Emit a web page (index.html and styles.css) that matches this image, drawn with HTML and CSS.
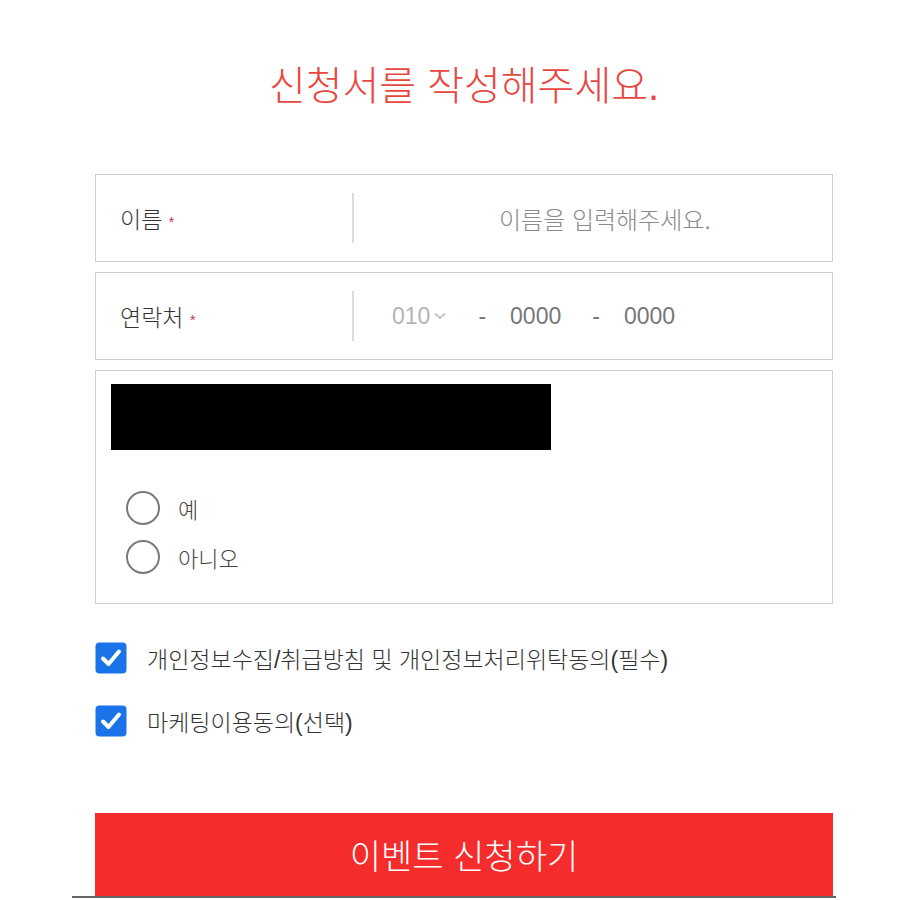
FILE: index.html
```html
<!DOCTYPE html>
<html lang="ko">
<head>
    <meta charset="UTF-8">
    <meta name="viewport" content="width=device-width, initial-scale=1.0">
    <title>이벤트 신청</title>
    <link rel="stylesheet" href="styles.css">
</head>
<body>
    <div class="container">
        <h1>신청서를 작성해주세요.</h1>
        <form class="apply-form">
            <div class="field-row">
                <div class="field-label">이름 <span class="req">*</span></div>
                <div class="field-input">
                    <span class="placeholder">이름을 입력해주세요.</span>
                </div>
            </div>
            <div class="field-row">
                <div class="field-label">연락처 <span class="req">*</span></div>
                <div class="field-input phone">
                    <span class="phone-prefix">010
                        <svg class="chevron" width="14" height="10" viewBox="0 0 14 10"><path d="M2 2.5 L7 7 L12 2.5" fill="none" stroke="#c8c8c8" stroke-width="2.2"/></svg>
                    </span>
                    <span class="dash">-</span>
                    <span class="phone-num">0000</span>
                    <span class="dash">-</span>
                    <span class="phone-num">0000</span>
                </div>
            </div>
            <div class="question-box">
                <div class="question-title"></div>
                <div class="radio-list">
                    <label class="radio-item"><span class="radio"></span>예</label>
                    <label class="radio-item"><span class="radio"></span>아니오</label>
                </div>
            </div>
            <div class="agree-list">
                <label class="agree-item">
                    <svg class="check" width="32" height="32" viewBox="0 0 32 32"><rect x="0.5" y="0.5" width="31" height="31" rx="4" fill="#1a73e8"/><path d="M8 16.5 L13.5 22 L24 9.5" fill="none" stroke="#fff" stroke-width="4" stroke-linecap="round" stroke-linejoin="round"/></svg>
                    개인정보수집/취급방침 및 개인정보처리위탁동의(필수)
                </label>
                <label class="agree-item">
                    <svg class="check" width="32" height="32" viewBox="0 0 32 32"><rect x="0.5" y="0.5" width="31" height="31" rx="4" fill="#1a73e8"/><path d="M8 16.5 L13.5 22 L24 9.5" fill="none" stroke="#fff" stroke-width="4" stroke-linecap="round" stroke-linejoin="round"/></svg>
                    마케팅이용동의(선택)
                </label>
            </div>
            <button type="button" class="submit-btn">이벤트 신청하기</button>
        </form>
    </div>
    <div class="bottom-line"></div>
</body>
</html>
```

FILE: styles.css
```css
body {
    margin: 0;
    background: #fff;
    font-family: "Liberation Sans", "Noto Sans CJK KR", sans-serif;
    color: #333;
}
.container {
    width: 738px;
    margin-left: 95px;
    padding-top: 58px;
}
h1 {
    margin: 0 0 59px;
    text-align: center;
    font-size: 40px;
    line-height: 57px;
    font-weight: 300;
    color: #e8473f;
}
.apply-form {
    display: flex;
    flex-direction: column;
}
.field-row {
    display: flex;
    align-items: center;
    height: 88px;
    box-sizing: border-box;
    border: 1px solid #cfcfcf;
    margin-bottom: 10px;
}
.field-label {
    width: 232px;
    padding-left: 24px;
    font-size: 23px;
    font-weight: 300;
    color: #333;
}
.req {
    color: #c4314b;
    font-size: 14px;
    vertical-align: middle;
}
.field-input {
    flex: 1;
    height: 50px;
    border-left: 2px solid #dcdcdc;
    display: flex;
    align-items: center;
    justify-content: center;
    padding-left: 24px;
    font-size: 23px;
}
.placeholder {
    color: #8a8a8a;
    font-size: 24px;
    font-weight: 300;
}
.field-input.phone {
    justify-content: flex-start;
    padding-left: 38px;
    color: #777;
}
.phone-prefix {
    color: #b4b4b4;
    display: flex;
    align-items: center;
    gap: 3px;
}
.dash {
    margin: 0 24px 0 31px;
}
.question-box {
    height: 234px;
    box-sizing: border-box;
    border: 1px solid #cfcfcf;
    padding: 13px 15px;
}
.question-title {
    width: 440px;
    height: 66px;
    background: #000;
}
.radio-list {
    display: flex;
    flex-direction: column;
    gap: 15px;
    margin-top: 41px;
    padding-left: 15px;
}
.radio-item {
    display: flex;
    align-items: center;
    gap: 18px;
    font-size: 22px;
    font-weight: 300;
    color: #444;
    height: 34px;
}
.radio {
    width: 30px;
    height: 30px;
    border: 2px solid #7a7a7a;
    border-radius: 50%;
}
.agree-list {
    display: flex;
    flex-direction: column;
    gap: 31px;
    margin-top: 38px;
}
.agree-item {
    display: flex;
    align-items: center;
    gap: 20px;
    font-size: 23px;
    font-weight: 300;
    color: #333;
    height: 32px;
}
.check {
    flex-shrink: 0;
}
.submit-btn {
    margin-top: 76px;
    height: 83px;
    border: none;
    background: #f42c2c;
    color: #fff;
    font-family: inherit;
    font-size: 34px;
    font-weight: 300;
    cursor: pointer;
}
.bottom-line {
    width: 764px;
    margin-left: 72px;
    height: 2px;
    background: #666;
}
```
